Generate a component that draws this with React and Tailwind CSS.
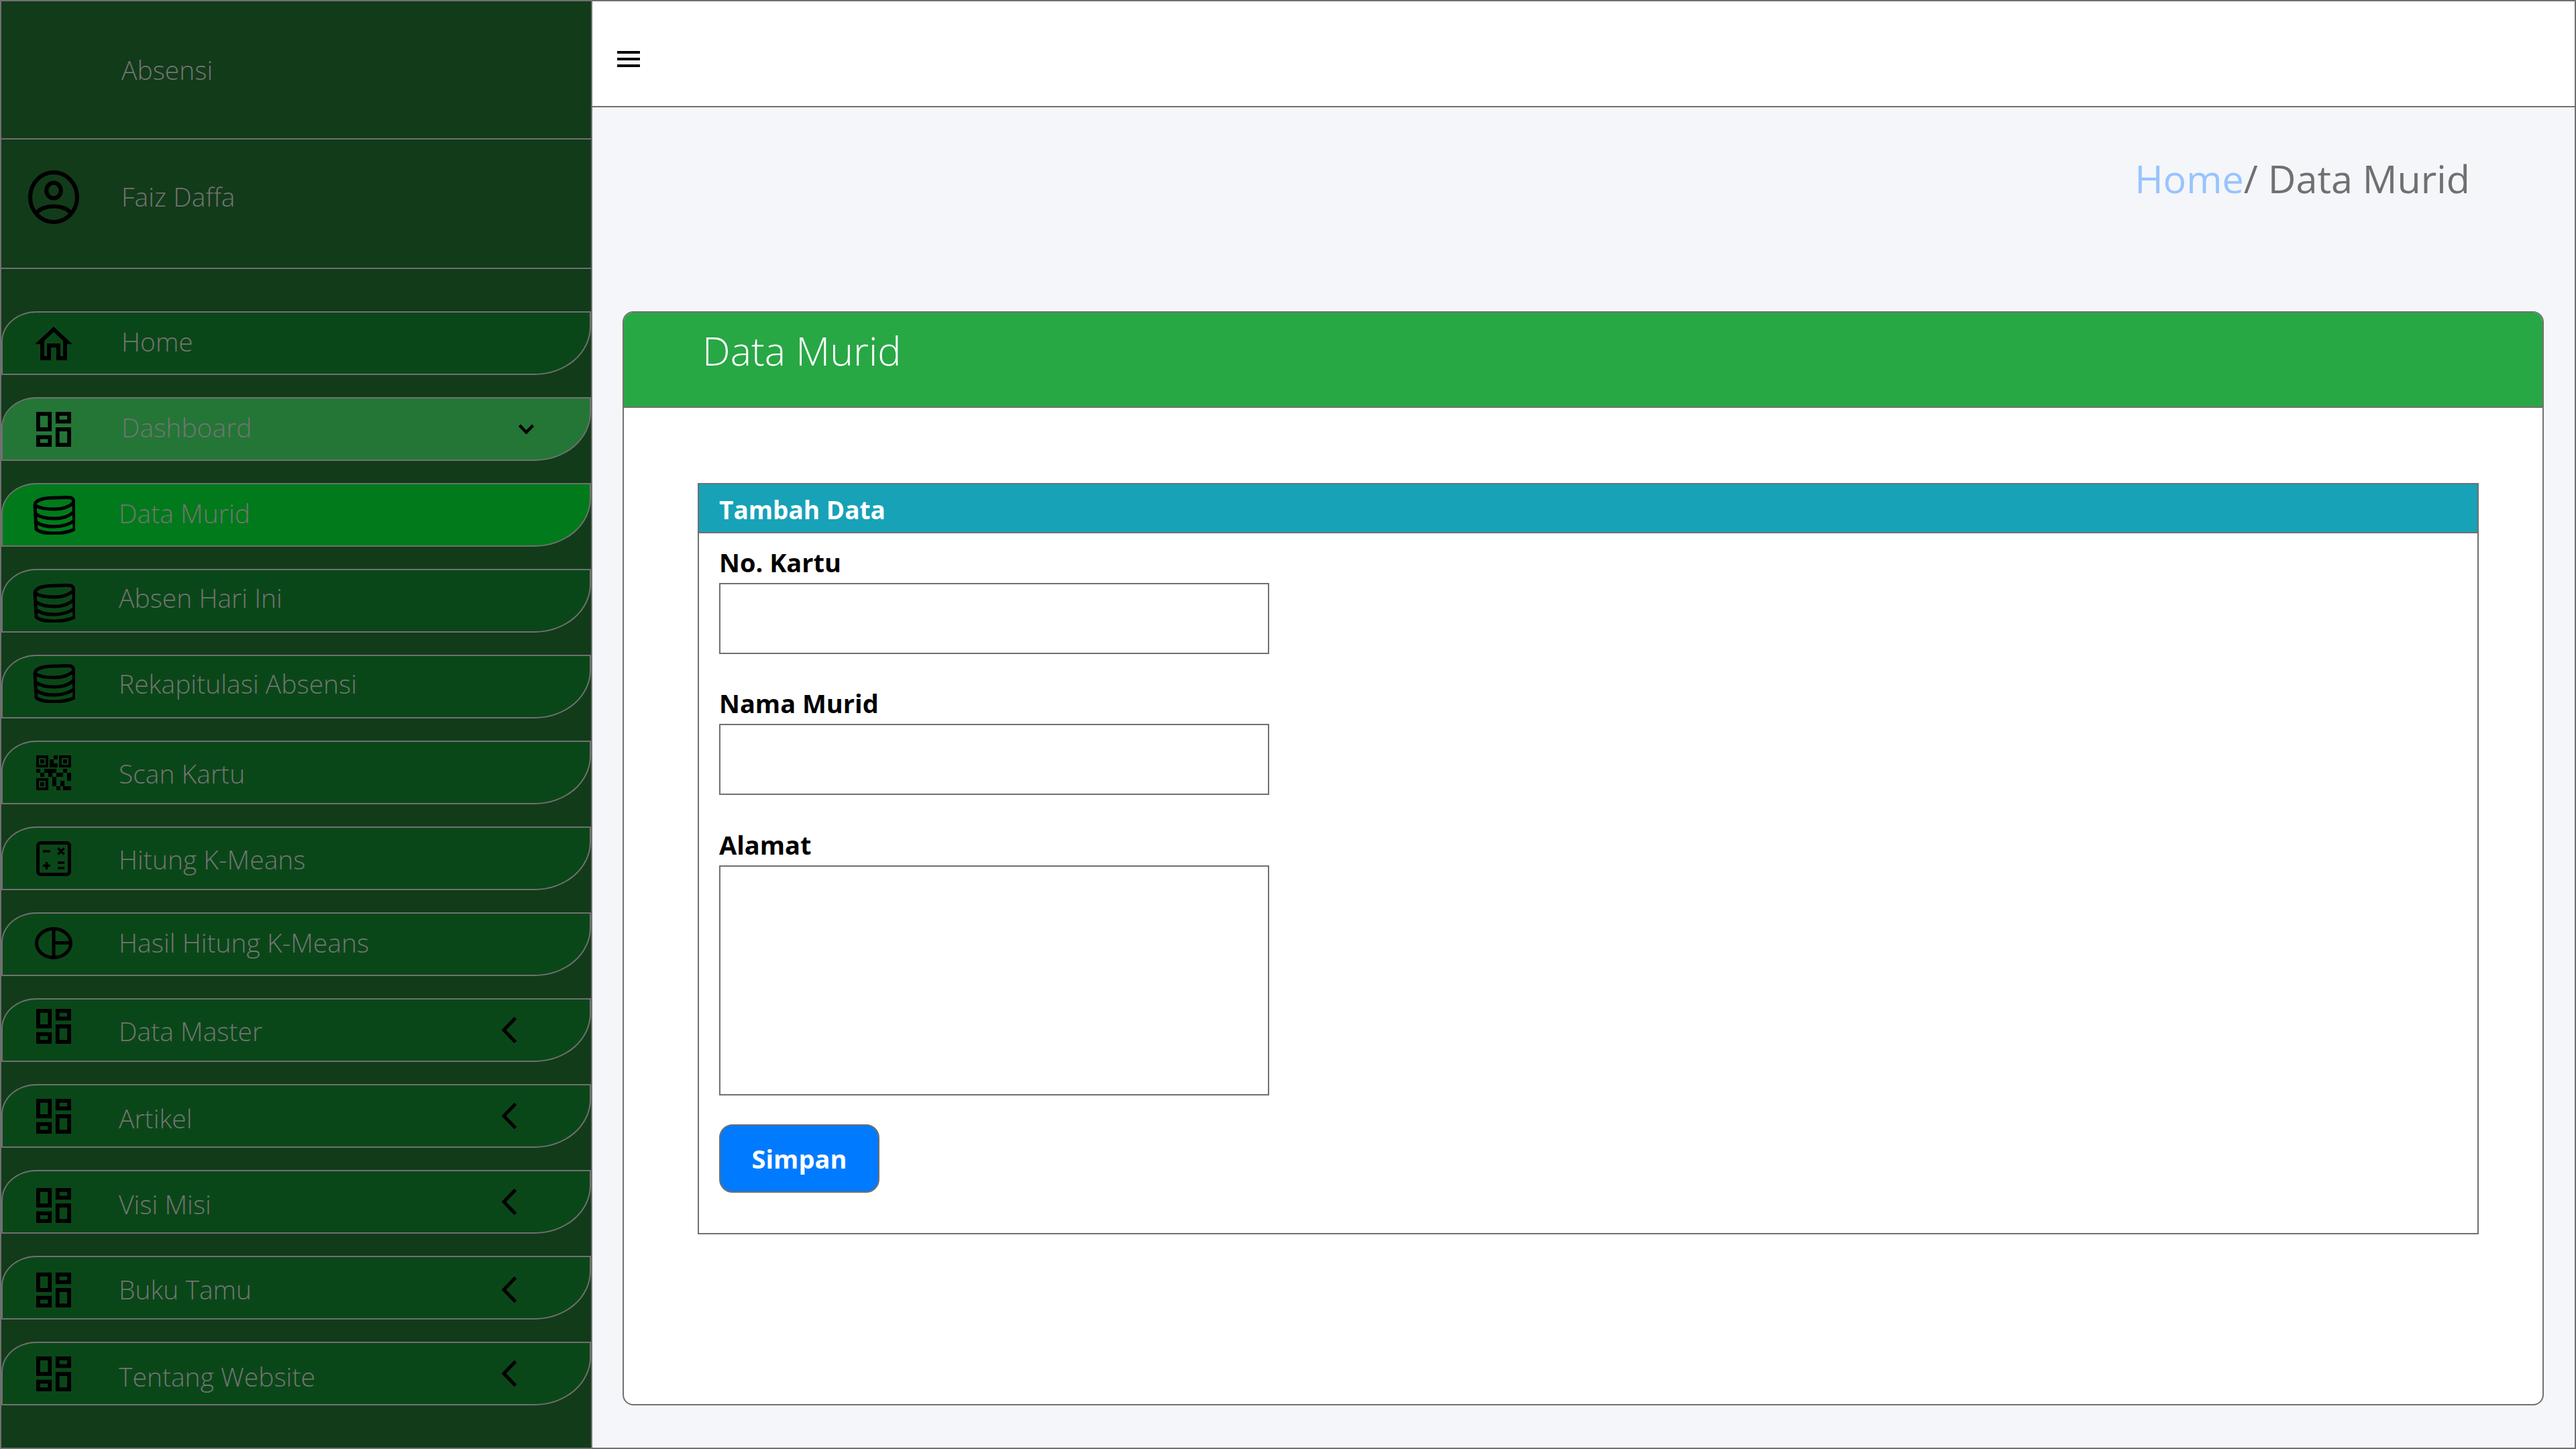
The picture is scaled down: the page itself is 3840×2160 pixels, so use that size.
const sans = "font-['Open_Sans','Noto_Sans',sans-serif]";

function HomeIcon() {
    return (
        <svg width="56" height="50" viewBox="0 0 56 50">
            <path fillRule="evenodd" d="M28 0 L56 26 H48 V50 H32 V31 H24 V50 H8 V26 H0 Z M28 8 L14 21 V44 H18 V25 H38 V44 H42 V21 Z" fill="#000" />
        </svg>
    );
}

function UserIcon() {
    return (
        <svg width="76" height="80" viewBox="0 0 76 80" fill="none" stroke="#000" strokeWidth="6">
            <ellipse cx="38" cy="40" rx="35" ry="37" />
            <ellipse cx="38" cy="30" rx="10.8" ry="11.5" />
            <path d="M12 64 C22 50 54 50 64 64" />
        </svg>
    );
}

function DashIcon() {
    return (
        <svg width="52" height="52" viewBox="3 3 18 18" preserveAspectRatio="none">
            <path d="M19 5v2h-4V5h4M9 5v6H5V5h4m10 8v6h-4v-6h4M9 17v2H5v-2h4M21 3h-8v6h8V3zM11 3H3v10h8V3zm10 8h-8v10h8V11zm-10 4H3v6h8v-6z" fill="#000" />
        </svg>
    );
}

function DbIcon() {
    return (
        <svg width="63" height="58" viewBox="0 0 63 58" fill="none" stroke="#000" strokeWidth="5" strokeLinejoin="round">
            <path d="M3 14 C3 6 17 3 32 3 C42 3 52 2 57 3 C60 4 61 7 61 12 L62 50 C52 55 40 56 30 56 C20 56 10 54 5 50 Z" />
            <path d="M3 14 C10 19 22 20 32 20 C44 20 54 17 61 10" />
            <path d="M4 27 C12 33 22 34 32 34 C44 34 54 31 61 24" />
            <path d="M5 39 C12 45 22 46 32 46 C44 46 54 43 62 37" />
        </svg>
    );
}

function QrIcon() {
    const blocks = [
        [13, 0, 3, 3], [10, 3, 3, 3], [10, 6, 6, 3],
        [0, 10, 3, 3], [6, 10, 9, 3], [20, 10, 3, 3],
        [3, 13, 3, 3], [9, 13, 3, 3], [15, 13, 5, 3], [23, 13, 3, 6],
        [12, 16, 3, 7], [18, 19, 3, 4], [15, 23, 3, 3], [20, 23, 6, 3],
    ];
    return (
        <svg width="52" height="52" viewBox="0 0 26 26">
            {[[0, 0], [17, 0], [0, 17]].map(([x, y]) => (
                <g key={`${x}-${y}`}>
                    <rect x={x + 1} y={y + 1} width="7" height="7" fill="none" stroke="#000" strokeWidth="2" />
                    <rect x={x + 3} y={y + 3} width="3" height="3" fill="#000" />
                </g>
            ))}
            {blocks.map(([x, y, w, h]) => (
                <rect key={`${x}-${y}`} x={x} y={y} width={w} height={h} fill="#000" />
            ))}
        </svg>
    );
}

function CalcIcon() {
    return (
        <svg width="52" height="52" viewBox="0 0 52 52" fill="none" stroke="#000">
            <rect x="2.5" y="2.5" width="47" height="47" rx="4" strokeWidth="5" />
            <path d="M10 15 H21 M32.5 10.5 L41.5 19.5 M41.5 10.5 L32.5 19.5 M10 36.5 H21 M15.5 31 V42 M32 32 H42 M32 40 H42" strokeWidth="3.5" />
        </svg>
    );
}

function PieIcon() {
    return (
        <svg width="56" height="48" viewBox="0 0 56 48" fill="none" stroke="#000" strokeWidth="5">
            <ellipse cx="28" cy="24" rx="25.5" ry="21.5" />
            <path d="M28 2 V46 M28 23.5 H54" />
        </svg>
    );
}

function ChevronLeft() {
    return (
        <svg width="22" height="39" viewBox="0 0 22 39" fill="none" stroke="#000" strokeWidth="5">
            <path d="M20.5 1.5 L3 19.5 L20.5 37.5" />
        </svg>
    );
}

function ChevronDown() {
    return (
        <svg width="23" height="15" viewBox="0 0 23 15" fill="none" stroke="#000" strokeWidth="4.5">
            <path d="M1.5 2 L11.5 12.5 L21.5 2" />
        </svg>
    );
}

// the source screenshot drifts a few pixels row by row, so offsets are per item
const menu = [
    { label: "Home", icon: HomeIcon, bg: "bg-[#0a4718]", text: "ml-[25px] -translate-y-[2px]" },
    { label: "Dashboard", icon: DashIcon, bg: "bg-[#237636]", text: "ml-[25px] -translate-y-[2px]", arrow: "down" },
    { label: "Data Murid", icon: DbIcon, bg: "bg-[#017a1b]", text: "ml-[21px] -translate-y-[2px]" },
    { label: "Absen Hari Ini", icon: DbIcon, iconPos: "translate-y-[3px]", text: "ml-[21px] -translate-y-[4px]" },
    { label: "Rekapitulasi Absensi", icon: DbIcon, iconPos: "-translate-y-[5px]", text: "ml-[21px] -translate-y-[4px]" },
    { label: "Scan Kartu", icon: QrIcon, text: "ml-[21px] translate-y-[2px]" },
    { label: "Hitung K-Means", icon: CalcIcon, text: "ml-[21px] translate-y-[2px]" },
    { label: "Hasil Hitung K-Means", icon: PieIcon, iconPos: "-translate-y-[2px]", text: "ml-[21px] -translate-y-[2px]" },
    { label: "Data Master", icon: DashIcon, arrow: "left", iconPos: "-translate-y-[6px]", text: "ml-[21px] translate-y-[2px]" },
    { label: "Artikel", icon: DashIcon, arrow: "left", text: "ml-[21px] translate-y-[4px]" },
    { label: "Visi Misi", icon: DashIcon, arrow: "left", iconPos: "translate-y-[5px]", text: "ml-[21px] translate-y-[4px]" },
    { label: "Buku Tamu", icon: DashIcon, arrow: "left", arrowPos: "translate-y-[3px]", iconPos: "translate-y-[3px]", text: "ml-[21px] translate-y-[3px]" },
    { label: "Tentang Website", icon: DashIcon, arrow: "left", text: "ml-[21px] translate-y-[5px]" },
];

function MenuItem({ item }) {
    const Icon = item.icon;
    return (
        <div className={`flex items-center h-[95px] border-2 border-[#707070] rounded-tl-[52px_45px] rounded-br-[84px_72px] ${item.bg || "bg-[#0a4718]"}`}>
            <div className={`w-[152px] flex justify-center shrink-0 ${item.iconPos || ""}`}>
                <Icon />
            </div>
            <span className={`${item.text} text-[39px] font-light text-[#747474]`}>{item.label}</span>
            {item.arrow === "left" && <div className={`ml-auto mr-[109px] ${item.arrowPos || ""}`}><ChevronLeft /></div>}
            {item.arrow === "down" && <div className="ml-auto mr-[83px]"><ChevronDown /></div>}
        </div>
    );
}

function Field({ label, children }) {
    return (
        <div>
            <label className="block h-[50px] leading-[50px] mb-[6px] text-[38px] font-bold text-black">{label}</label>
            {children}
        </div>
    );
}

export default function App() {
    return (
        <div className={`w-[3840px] h-[2160px] flex border-2 border-[#707070] overflow-hidden ${sans}`}>
            <aside className="w-[881px] shrink-0 bg-[#123b1a] border-r-2 border-[#707070]">
                <div className="h-[206px] flex items-center pl-[179px] border-b-2 border-[#707070]">
                    <span className="text-[39px] font-light text-[#747474]">Absensi</span>
                </div>
                <div className="h-[193px] flex items-center pb-[20px] border-b-2 border-[#707070]">
                    <div className="w-[156px] flex justify-center"><UserIcon /></div>
                    <span className="ml-[23px] text-[39px] font-light text-[#747474]">Faiz Daffa</span>
                </div>
                <nav className="pt-[63px] flex flex-col gap-[33px]">
                    {menu.map((item) => <MenuItem key={item.label} item={item} />)}
                </nav>
            </aside>

            <main className="flex-1 bg-[#f4f6f9] flex flex-col">
                <header className="h-[158px] shrink-0 bg-white border-b-2 border-[#707070] flex items-center pl-[37px]">
                    <svg width="34" height="24" viewBox="0 0 34 24" fill="#000" className="translate-y-[8px]">
                        <rect y="0" width="34" height="4" />
                        <rect y="10" width="34" height="4" />
                        <rect y="20" width="34" height="4" />
                    </svg>
                </header>

                <div className="h-[304px] shrink-0 flex justify-end pr-[156px] pt-[58px]">
                    <div className="text-[57.5px] leading-[96px] text-[#707070]">
                        <span className="text-[#99c3ff]">Home</span>/ Data Murid
                    </div>
                </div>

                <section className="ml-[45px] mr-[46px] h-[1631px] bg-white border-2 border-[#707070] rounded-[16px] overflow-hidden">
                    <div className="h-[142px] bg-[#28a745] border-b-2 border-[#707070] pl-[117px] pt-[16px]">
                        <h1 className="text-[59px] leading-[80px] font-light text-white">Data Murid</h1>
                    </div>
                    <div className="mt-[112px] ml-[110px] mr-[95px] border-2 border-[#707070]">
                        <div className="h-[73px] bg-[#17a2b8] border-b-2 border-[#707070] flex items-center pl-[30px]">
                            <span className="text-[37px] font-bold text-white translate-y-[2px]">Tambah Data</span>
                        </div>
                        <div className="pl-[30px] pt-[18px] pb-[60px] flex flex-col">
                            <Field label="No. Kartu">
                                <input className="block w-[820px] h-[106px] bg-white border-2 border-[#707070]" />
                            </Field>
                            <div className="mt-[48px]">
                                <Field label="Nama Murid">
                                    <input className="block w-[820px] h-[106px] bg-white border-2 border-[#707070]" />
                                </Field>
                            </div>
                            <div className="mt-[49px]">
                                <Field label="Alamat">
                                    <textarea className="block w-[820px] h-[343px] bg-white border-2 border-[#707070] resize-none" />
                                </Field>
                            </div>
                            <button className="mt-[43px] w-[239px] h-[102px] bg-[#007bff] border-2 border-[#707070] rounded-[20px] text-[38px] font-bold text-white">
                                Simpan
                            </button>
                        </div>
                    </div>
                </section>
            </main>
        </div>
    );
}
